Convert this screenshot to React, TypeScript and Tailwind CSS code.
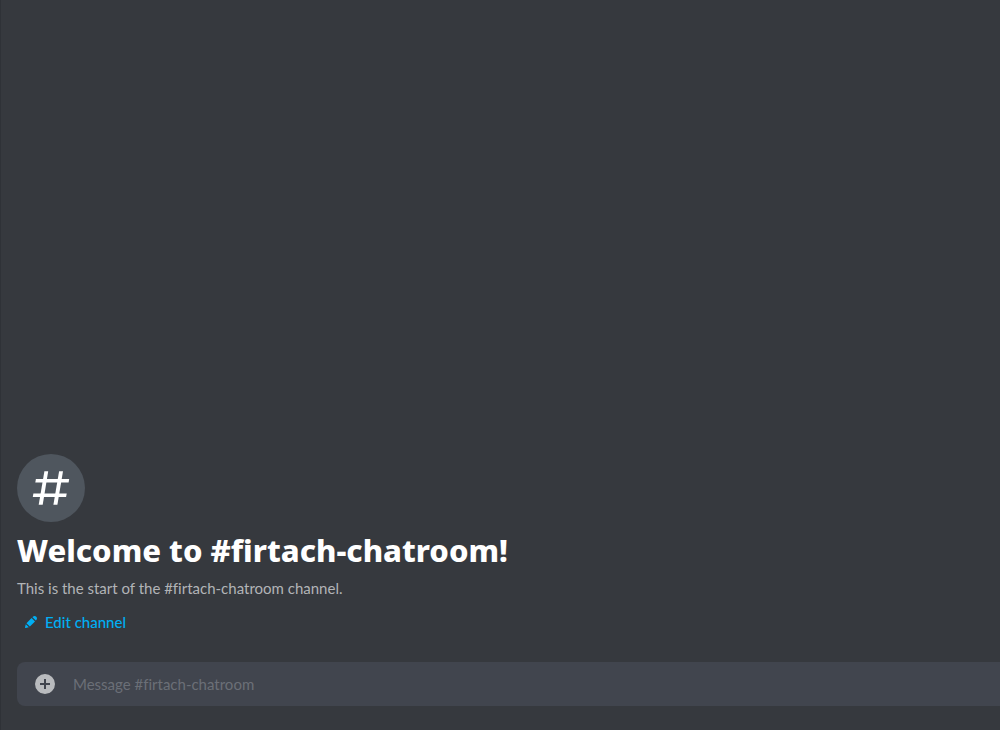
import React from "react";

const CHANNEL = "firtach-chatroom";

function HashIcon() {
  return (
    <svg viewBox="0 0 68 68" className="size-full" fill="#ffffff" aria-hidden="true">
      <path d="M27.4 17.3H31.2L25.7 50.7H21.7Z" />
      <path d="M42.1 17.3H46L40.4 50.7H36.4Z" />
      <path d="M18.9 24.9H52.2L51.6 28.4H18.3Z" />
      <path d="M16.4 39.6H49.7L49.1 43.1H15.8Z" />
    </svg>
  );
}

function PencilIcon() {
  return (
    <svg viewBox="0 0 24 24" className="size-4" fill="currentColor" aria-hidden="true">
      <path d="M19.2929 9.8299L19.9409 9.18278C21.353 7.77064 21.353 5.47197 19.9409 4.05892C18.5287 2.64678 16.2292 2.64678 14.817 4.05892L14.1699 4.70694L19.2929 9.8299ZM12.8962 5.97688L5.18469 13.6906L10.3085 18.813L18.0201 11.0992L12.8962 5.97688ZM4.11851 20.9704L8.75906 19.8112L4.18692 15.239L3.02678 19.8796C2.95028 20.1856 3.04028 20.5105 3.26349 20.7337C3.48669 20.9569 3.8116 21.046 4.11851 20.9704Z" />
    </svg>
  );
}

function PlusCircleIcon() {
  return (
    <svg viewBox="0 0 24 24" className="size-6" fill="currentColor" aria-hidden="true">
      <path
        fillRule="evenodd"
        d="M12 2a10 10 0 1 0 0 20 10 10 0 0 0 0-20ZM11 7h2v4h4v2h-4v4h-2v-4H7v-2h4Z"
      />
    </svg>
  );
}

function ChannelIntro() {
  return (
    <header className="px-4">
      <div className="size-[68px] rounded-full bg-[#4f565e]">
        <HashIcon />
      </div>
      <h1 className="mt-2 font-['Noto_Sans','Open_Sans',sans-serif] text-[31px] leading-10 font-extrabold text-white">
        Welcome to #{CHANNEL}!
      </h1>
      <p className="mt-2 text-[15px] leading-5 text-[#b2b4b7]">
        This is the start of the #{CHANNEL} channel.
      </p>
      <button
        type="button"
        className="mt-2 flex h-8 items-center gap-1.5 pl-1.5 text-[15px] font-medium text-[#00aff4] hover:underline"
      >
        <PencilIcon />
        Edit channel
      </button>
    </header>
  );
}

function Composer() {
  return (
    <form className="mt-6 mb-6 ml-4 flex h-11 items-center rounded-l-lg bg-[#41454e]">
      <button type="button" aria-label="Add attachment" className="px-4 text-[#b9bbbe]">
        <PlusCircleIcon />
      </button>
      <input
        type="text"
        aria-label={`Message #${CHANNEL}`}
        placeholder={`Message #${CHANNEL}`}
        className="h-full min-w-0 flex-1 bg-transparent text-[15px] text-[#dcddde] outline-none placeholder:text-[#6b6f77]"
      />
    </form>
  );
}

export default function App() {
  return (
    <main className="flex min-h-screen flex-col justify-end border-l border-[#2f3237] bg-[#36393e] font-['Lato','Open_Sans',sans-serif] [font-variant-ligatures:none]">
      <ChannelIntro />
      <Composer />
    </main>
  );
}
